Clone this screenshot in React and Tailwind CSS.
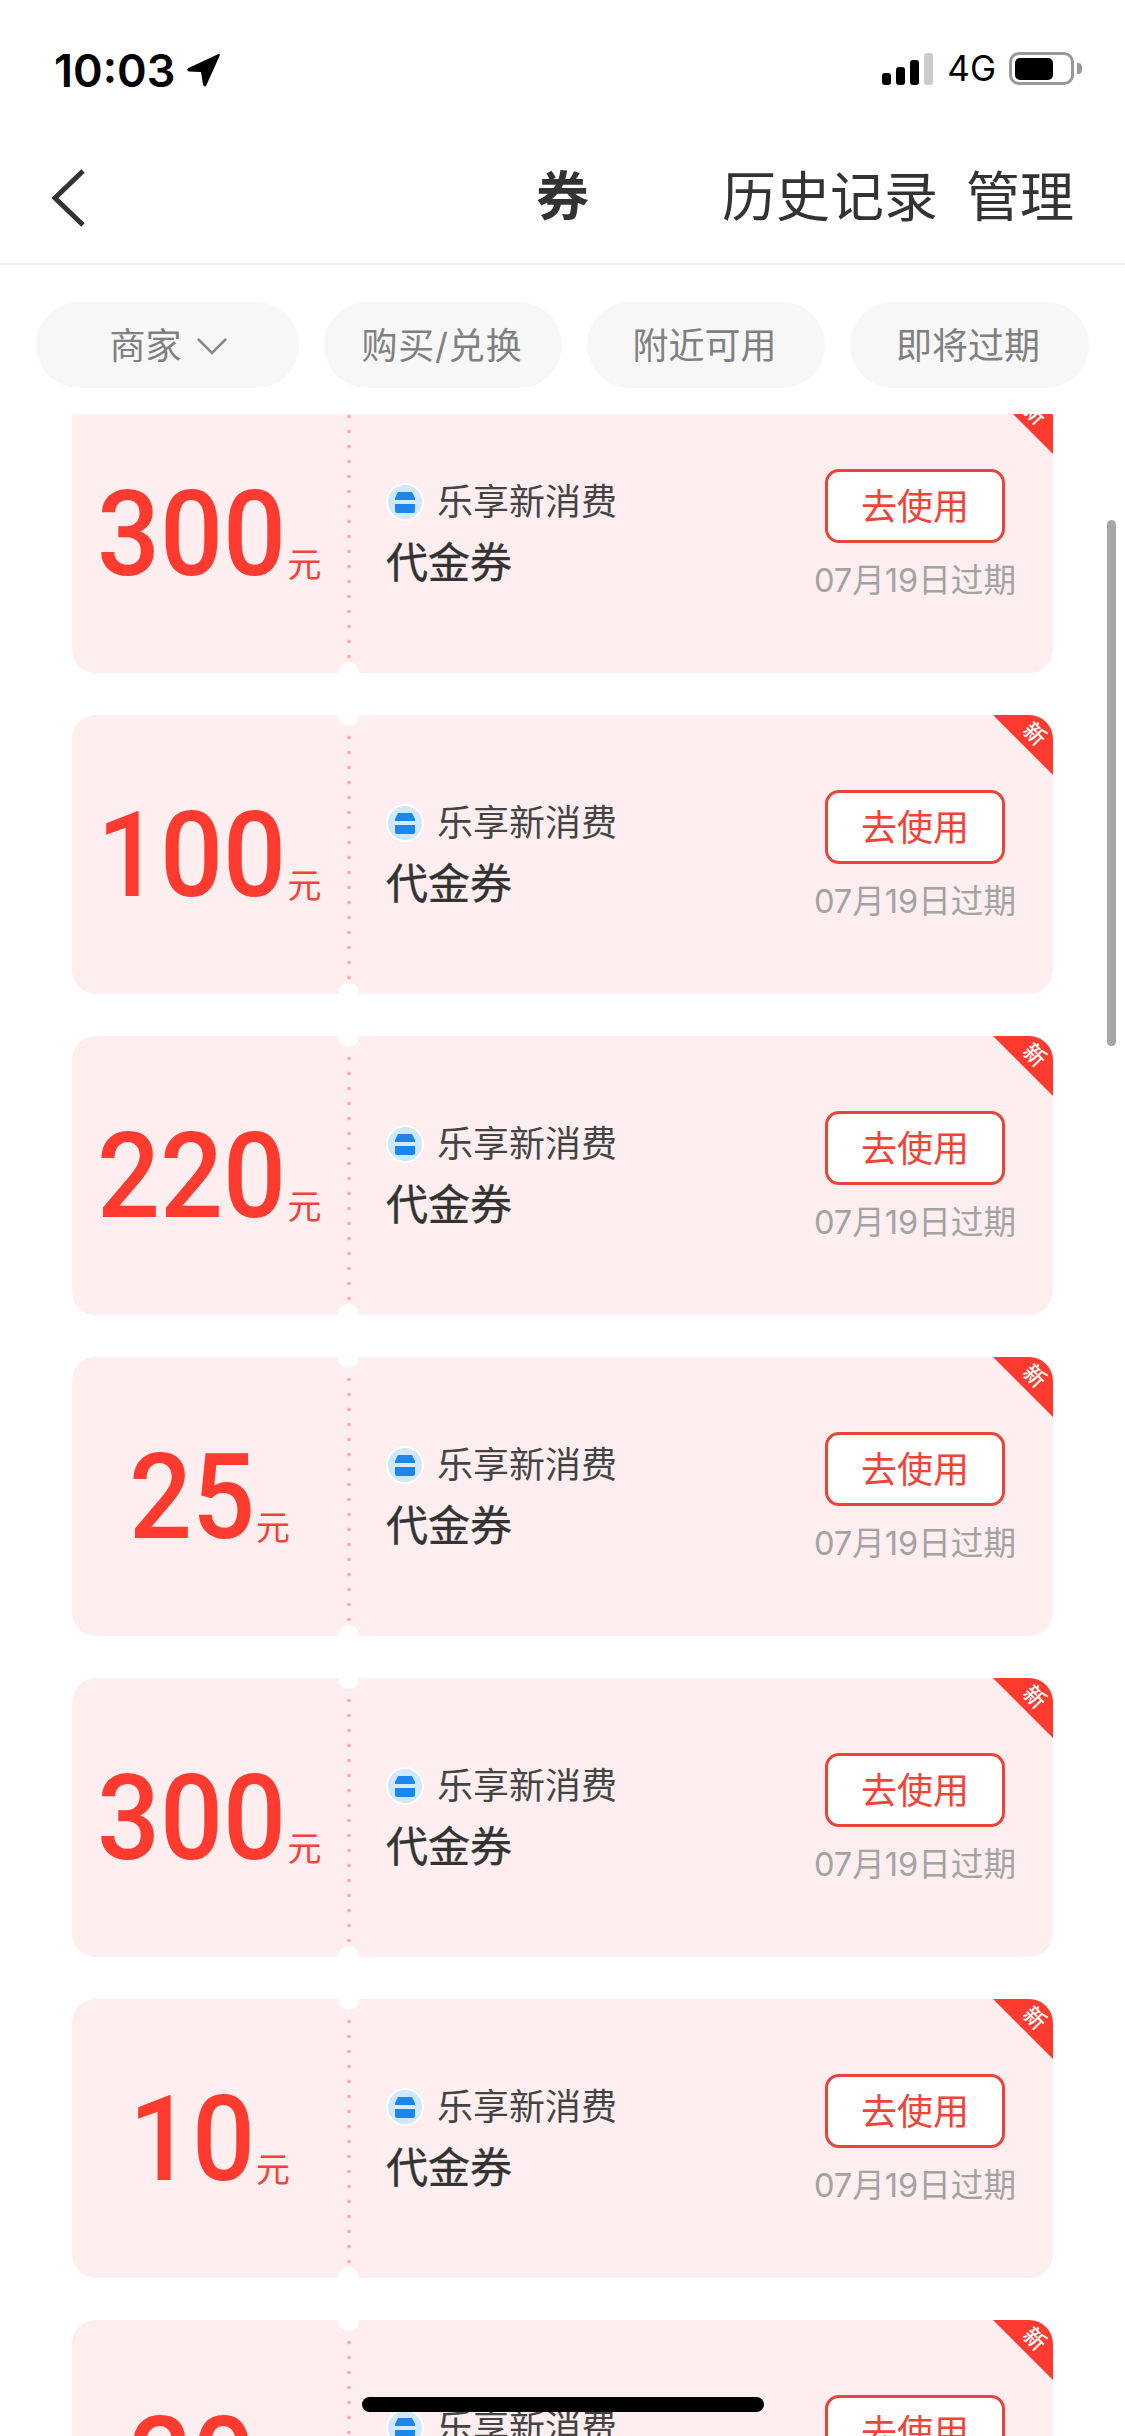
import React from "react";

const cjk = "font-['Inter','Noto_Sans_CJK_SC',sans-serif]";
const amounts = ["300", "100", "220", "25", "300", "10", "20"];

function Coupon({ amount }) {
  const pull = amount.length === 3 ? "-mx-[6px]" : "-mx-[4px]";
  return (
    <div className="relative flex h-[279px] overflow-hidden rounded-[24px] bg-[#ffeef0]">
      <div className="flex w-[275px] shrink-0 items-center justify-center">
        <span className={`mt-[2px] inline-block scale-x-[0.94] font-['Roboto',sans-serif] text-[118px] leading-none font-medium text-[#ff3b30] ${pull}`}>
          {amount}
        </span>
        <span className="mt-[62px] ml-[1px] text-[34px] leading-none text-[#f04438]">元</span>
      </div>
      <div className="relative w-[4px] shrink-0 bg-[radial-gradient(circle,#f5b3b5_1.6px,transparent_2.2px)] bg-[length:4px_15px]">
        <div className="absolute -top-[11px] -left-[9px] h-[22px] w-[21px] rounded-full bg-white" />
        <div className="absolute -bottom-[11px] -left-[9px] h-[22px] w-[21px] rounded-full bg-white" />
      </div>
      <div className="flex flex-1 items-start justify-between pr-[37px] pl-[35px]">
        <div className="pt-[88px]">
          <div className="flex items-center gap-[13px]">
            <div className="flex h-[38px] w-[38px] items-center justify-center rounded-full border-2 border-white bg-[#cfe8fb]">
              <svg width="20" height="22" viewBox="0 0 20 22">
                <path d="M3 1h14l3 6v13a2 2 0 0 1-2 2H2a2 2 0 0 1-2-2V7z" fill="#1c86ea" />
                <rect x="0" y="9" width="20" height="4" fill="#d5ecff" />
              </svg>
            </div>
            <span className="text-[36px] leading-[40px] text-[#444]">乐享新消费</span>
          </div>
          <div className="mt-[17px] text-[42px] leading-[48px] text-[#333] [-webkit-text-stroke:0.4px_#333]">代金券</div>
        </div>
        <div className="flex flex-col items-center pt-[75px]">
          <div className="flex h-[74px] w-[180px] items-center justify-center rounded-[14px] border-[3px] border-[#ea4338] bg-white pt-[1px] text-[36px] leading-none text-[#f04438]">
            去使用
          </div>
          <div className="mt-[17px] text-[32.6px] leading-[40px] whitespace-nowrap text-[#a3a3a3]">07月19日过期</div>
        </div>
      </div>
      <div className="absolute top-0 right-0 h-[60px] w-[60px] bg-[#ff3b30] [clip-path:polygon(0_0,100%_0,100%_100%)]" />
      <span className="absolute top-[8px] right-[7px] rotate-45 text-[22px] leading-none font-medium text-white">新</span>
    </div>
  );
}

function Chip({ w, children, extra }) {
  return (
    <div className={`flex h-[86px] items-center justify-center rounded-[43px] bg-[#f7f7f7] pt-[2px] text-[36px] leading-none text-[#808080] ${w} ${extra}`}>
      {children}
    </div>
  );
}

export default function App() {
  return (
    <div className={`relative flex h-[2436px] w-[1125px] flex-col overflow-hidden bg-white ${cjk}`}>
      <div className="flex h-[130px] shrink-0 items-start justify-between pt-[52px] pr-[43px] pl-[54px]">
        <div className="flex items-center">
          <span className="font-['Inter',sans-serif] text-[45px] leading-[35px] font-semibold text-black">10:03</span>
          <svg className="ml-[10px]" width="37" height="36" viewBox="0 0 36 36">
            <path d="M3 16 L33 2 Q35 1 34 4 L21 33 Q19 36 17.5 32.5 L15.5 20 L3.5 19.5 Q0 18 3 16Z" fill="#000" />
          </svg>
        </div>
        <div className="flex items-start">
          <div className="flex h-[33px] items-end gap-[5px]">
            <div className="h-[12px] w-[9px] rounded-[3px] bg-black" />
            <div className="h-[18px] w-[9px] rounded-[3px] bg-black" />
            <div className="h-[25px] w-[9px] rounded-[3px] bg-black" />
            <div className="h-[32px] w-[9px] rounded-[3px] bg-[#cccccc]" />
          </div>
          <span className="ml-[14px] font-['Inter',sans-serif] text-[35px] leading-[33px] font-normal text-black">4G</span>
          <div className="ml-[13px] flex h-[33px] w-[65px] items-center rounded-[10px] border-[3px] border-[#999] pl-[3px]">
            <div className="h-[22px] w-[38px] rounded-[5px] bg-black" />
          </div>
          <div className="mt-[11px] ml-[3px] h-[11px] w-[5px] rounded-r-[4px] bg-[#999]" />
        </div>
      </div>

      <div className="relative flex h-[135px] shrink-0 items-start justify-end border-b-2 border-[#efefef] pt-[38px] pr-[51px] text-[#333]">
        <svg className="absolute top-[38px] left-[50px]" width="36" height="60" viewBox="0 0 36 60">
          <path d="M33 3 L5 30 L33 57" fill="none" stroke="#333" strokeWidth="5" />
        </svg>
        <span className="absolute top-[37px] left-0 w-full text-center text-[53px] leading-[60px] font-bold">券</span>
        <span className="relative text-[54px] leading-[60px]">历史记录</span>
        <span className="relative ml-[28px] text-[54px] leading-[60px]">管理</span>
      </div>

      <div className="flex shrink-0 gap-[25px] pt-[37px] pb-[26px] pl-[36px]">
        <Chip w="w-[263px]" extra="pl-[2px]">
          商家
          <svg className="ml-[14px]" width="32" height="20" viewBox="0 0 32 20">
            <path d="M2 3 L16 17 L30 3" fill="none" stroke="#888" strokeWidth="2.5" />
          </svg>
        </Chip>
        <Chip w="w-[238px]" extra="pr-[2px] tracking-[0.8px]">购买/兑换</Chip>
        <Chip w="w-[238px]" extra="pr-[3px]">附近可用</Chip>
        <Chip w="w-[239px]" extra="pr-[3px]">即将过期</Chip>
      </div>

      <div className="min-h-0 flex-1 overflow-hidden">
        <div className="-mt-[20px] flex flex-col gap-[42px] pr-[72px] pl-[72px]">
          {amounts.map((a, i) => (
            <Coupon key={i} amount={a} />
          ))}
        </div>
      </div>

      <div className="absolute top-[520px] left-[1107px] h-[526px] w-[9px] rounded-full bg-[#a6a6a6]" />
      <div className="absolute top-[2397px] left-[362px] h-[15px] w-[402px] rounded-full bg-black" />
    </div>
  );
}
